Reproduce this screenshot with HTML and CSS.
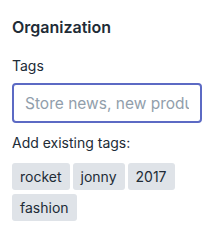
FILE: index.html
```html
<!DOCTYPE html>
<html>
<head>
    <meta charset="UTF-8">
    <title>Organization</title>
    <link rel="stylesheet" href="styles.css">
</head>
<body>
    <div class="card">
        <h2 class="card-title">Organization</h2>
        <label class="field-label" for="tags">Tags</label>
        <input type="text" id="tags" class="tag-input" placeholder="Store news, new products">
        <div class="existing-label">Add existing tags:</div>
        <div class="tag-list">
            <span class="tag">rocket</span>
            <span class="tag">jonny</span>
            <span class="tag">2017</span>
            <span class="tag">fashion</span>
        </div>
    </div>
</body>
</html>
```

FILE: styles.css
```css
body {
    margin: 0;
    background-color: #ffffff;
    font-family: Inter, "Noto Sans", sans-serif;
    color: #212b36;
}

.card {
    padding: 12px 15px 12px 12px;
}

.card-title {
    margin: 3px 0 0 0;
    font-size: 16px;
    line-height: 24px;
    font-weight: 600;
}

.field-label {
    display: block;
    margin-top: 17px;
    font-size: 14px;
    line-height: 20px;
}

.tag-input {
    display: block;
    box-sizing: border-box;
    width: 190px;
    height: 40px;
    margin-top: 7px;
    padding: 0 11px;
    border: 2px solid #5c6ac4;
    border-radius: 4px;
    font-family: inherit;
    font-size: 15.5px;
    color: #212b36;
    outline: none;
}

.tag-input::placeholder {
    color: #919eab;
}

.existing-label {
    margin-top: 10px;
    font-size: 14px;
    line-height: 20px;
}

.tag-list {
    display: flex;
    flex-wrap: wrap;
    gap: 4px 3px;
    width: 190px;
    margin-top: 10px;
}

.tag {
    display: inline-block;
    height: 27px;
    line-height: 27px;
    padding: 0 8px;
    background-color: #dfe3e8;
    border-radius: 3px;
    font-size: 14px;
}
```
